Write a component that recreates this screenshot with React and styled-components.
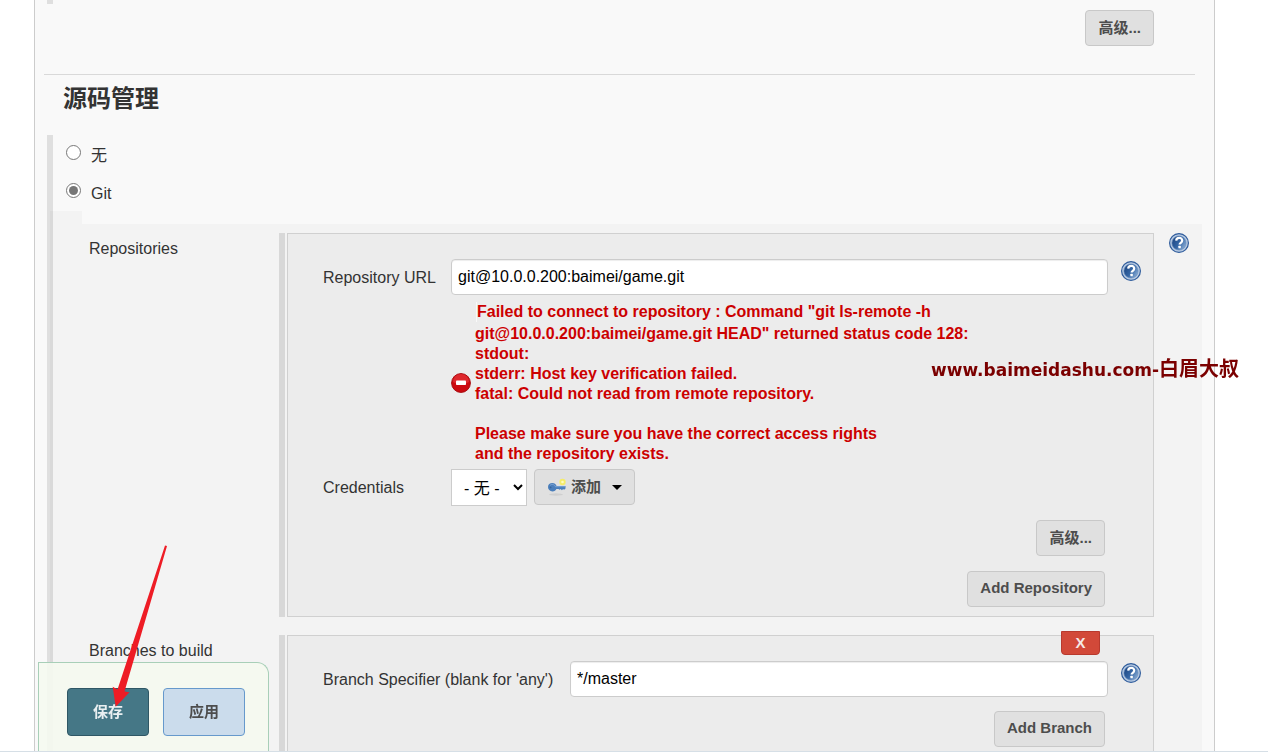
import { useId, useState } from "react";
import styled, { createGlobalStyle } from "styled-components";

const errorLines = [
  'Failed to connect to repository : Command "git ls-remote -h',
  'git@10.0.0.200:baimei/game.git HEAD" returned status code 128:',
  "stdout:",
  "stderr: Host key verification failed.",
  "fatal: Could not read from remote repository.",
  "",
  "Please make sure you have the correct access rights",
  "and the repository exists.",
];

function HelpIcon() {
  const id = useId();

  return (
    <svg width="20" height="20" viewBox="0 0 20 20" aria-hidden="true">
      <defs>
        <linearGradient id={id} x1="0" y1="0.2" x2="1" y2="0.8">
          <stop offset="0" stopColor="#1d4580" />
          <stop offset="0.5" stopColor="#3465a4" />
          <stop offset="1" stopColor="#8fb0d6" />
        </linearGradient>
      </defs>
      <circle cx="10" cy="10" r="9.4" fill="#b9cbe2" stroke="#2f5c9c" strokeWidth="1.2" />
      <circle cx="10" cy="10" r="7.1" fill={`url(#${id})`} stroke="#6288bb" strokeWidth="0.6" />
      <path
        d="M7.2 7.6C7.3 5.7 8.5 4.9 10.2 4.9c1.8 0 3 1 3 2.5 0 2.4-2.6 2.3-2.6 4.2"
        fill="none"
        stroke="#fff"
        strokeWidth="2.2"
      />
      <rect x="9.4" y="12.8" width="2.4" height="2.4" rx="0.5" fill="#fff" />
    </svg>
  );
}

function ErrorIcon() {
  return (
    <svg width="20" height="20" viewBox="0 0 20 20" aria-hidden="true">
      <circle cx="10" cy="10" r="9.4" fill="#cc0a10" stroke="#a80c10" strokeWidth="1" />
      <path d="M2 9a8 8 0 0 1 16 0c-4 2.5-12 2.5-16 0z" fill="#e5343a" opacity="0.7" />
      <rect x="5" y="7.5" width="10" height="4.5" rx="0.8" fill="#fff" />
    </svg>
  );
}

function KeyIcon() {
  return (
    <svg width="20" height="20" viewBox="0 0 20 20" aria-hidden="true">
      <ellipse cx="9" cy="18.5" rx="7" ry="1.2" fill="#cfcfcf" />
      <path
        d="M5.5 7C2.7 7 1 8.600 1 11s1.800 4.400 4.500 4.400c2 0 3.200-1 3.900-2.400h2.100l1 .8 1.200-.8 1.200 1.200 1.200-1.200 1 .8 1.400-1.200V10H9.600C8.800 8 7.500 7 5.500 7z"
        fill="#4a7ebb"
      />
      <path d="M3 9.400c1.500-1.500 4-1.500 5.500 1.300H18" fill="none" stroke="#7ba4d4" strokeWidth="1" />
      <circle cx="3.600" cy="11.400" r="0.9" fill="#35629c" />
      <circle cx="15.500" cy="6" r="3.200" fill="#f5ec6a" />
      <circle cx="15.500" cy="6" r="1.300" fill="#fffbc0" />
    </svg>
  );
}

export default function App() {
  const [scm, setScm] = useState("git");
  const [url, setUrl] = useState("git@10.0.0.200:baimei/game.git");
  const [branch, setBranch] = useState("*/master");

  return (
    <>
      <GlobalStyle />
      <Page>
        <Panel>
          <TopSection>
            <BarEnd />
            <Button>高级...</Button>
          </TopSection>
          <Divider />
          <Title>源码管理</Title>

          <ScmBlock>
            <RadioRow>
              <input
                type="radio"
                name="scm"
                checked={scm === "none"}
                onChange={() => setScm("none")}
              />
              <span>无</span>
            </RadioRow>
            <RadioRow>
              <input
                type="radio"
                name="scm"
                checked={scm === "git"}
                onChange={() => setScm("git")}
              />
              <span>Git</span>
            </RadioRow>

            <NestedTab />
            <Nested>
              <SectionName>Repositories</SectionName>
              <Handle>
                <Card>
                  <FieldRow $labelWidth="128px">
                    <label htmlFor="url">Repository URL</label>
                    <TextInput id="url" value={url} onChange={(e) => setUrl(e.target.value)} />
                    <HelpButton aria-label="Help for Repository URL">
                      <HelpIcon />
                    </HelpButton>
                  </FieldRow>

                  <ErrorRow>
                    <ErrorIcon />
                    <div>
                      {errorLines.map((line, index) => (
                        <ErrorLine key={index}>{line}</ErrorLine>
                      ))}
                    </div>
                  </ErrorRow>

                  <FieldRow $labelWidth="128px">
                    <label htmlFor="credentials">Credentials</label>
                    <Credentials>
                      <Select id="credentials">
                        <option>- 无 -</option>
                      </Select>
                      <Button>
                        <KeyIcon />
                        添加
                        <Caret />
                      </Button>
                    </Credentials>
                  </FieldRow>

                  <Actions>
                    <Button>高级...</Button>
                    <Button>Add Repository</Button>
                  </Actions>
                </Card>
              </Handle>
              <HelpButton aria-label="Help for Git">
                <HelpIcon />
              </HelpButton>

              <SectionName>Branches to build</SectionName>
              <Handle>
                <Card>
                  <DeleteButton>X</DeleteButton>
                  <FieldRow $labelWidth="247px">
                    <label htmlFor="branch">Branch Specifier (blank for 'any')</label>
                    <TextInput
                      id="branch"
                      value={branch}
                      onChange={(e) => setBranch(e.target.value)}
                    />
                    <HelpButton aria-label="Help for Branch Specifier">
                      <HelpIcon />
                    </HelpButton>
                  </FieldRow>
                  <Actions>
                    <Button>Add Branch</Button>
                  </Actions>
                </Card>
              </Handle>
            </Nested>
          </ScmBlock>
        </Panel>

        <SaveBar>
          <SaveButton $primary>保存</SaveButton>
          <SaveButton>应用</SaveButton>
        </SaveBar>
        <BottomLine />

        <Watermark>
          www.baimeidashu.com-<span>白眉大叔</span>
        </Watermark>

        <Arrow width="60" height="166" viewBox="0 0 60 166" aria-hidden="true">
          <path
            d="M55 0.5L57 1L14.5 146.5L19.5 147.3L5.7 161.7L2.7 141.7L7.5 144.500z"
            fill="#ee1c25"
          />
        </Arrow>
      </Page>
    </>
  );
}

const GlobalStyle = createGlobalStyle`
  * {
    box-sizing: border-box;
  }

  body {
    margin: 0;
    background-color: #fff;
  }

  body, button, input, select {
    font-family: "Liberation Sans", "Noto Sans CJK SC", sans-serif;
  }
`;

const Page = styled.div`
  height: 100vh;
  overflow: hidden;
  padding: 0 53px 0 34px;
  color: #333;
  font-size: 16px;
  line-height: 20px;
`;

const Panel = styled.main`
  min-height: 100%;
  border: solid #ccc;
  border-width: 0 1px;
  background-color: #f9f9f9;
`;

const TopSection = styled.div`
  display: flex;
  justify-content: space-between;
  align-items: flex-start;
  padding: 0 60px 28px 12px;

  button {
    margin-top: 10px;
  }
`;

const BarEnd = styled.div`
  width: 6px;
  height: 4px;
  background-color: #dfdfdf;
`;

const Divider = styled.hr`
  height: 1px;
  margin: 0 19px 0 9px;
  border: none;
  background-color: #d9d9d9;
`;

const Title = styled.h2`
  margin: 0;
  padding: 8px 28px 20px;
  font-size: 24px;
  line-height: 32px;
`;

const ScmBlock = styled.div`
  margin: 0 12px;
  border-left: 6px solid #dfdfdf;
`;

const RadioRow = styled.label`
  display: flex;
  align-items: center;
  gap: 10px;
  height: 38px;
  padding: 3px 0 0 13px;

  input {
    width: 15px;
    height: 15px;
    margin: 0 0 6px;
    accent-color: #767676;
  }
`;

const NestedTab = styled.div`
  width: 32px;
  height: 13px;
  margin-left: -3px;
  background-color: rgba(0, 0, 0, 0.025);
`;

const Nested = styled.div`
  display: grid;
  grid-template-columns: 190px 1fr 35px;
  row-gap: 18px;
  margin-left: -3px;
  padding: 9px 13px 20px 39px;
  background-color: rgba(0, 0, 0, 0.025);
`;

const SectionName = styled.div`
  padding-top: 6px;
`;

const Handle = styled.div`
  padding-left: 2px;
  border-left: 6px solid #d8d8d8;
`;

const Card = styled.div`
  position: relative;
  padding: 25px 12px 9px 35px;
  border: 1px solid #d0d0d0;
  background-color: #ececec;
`;

const FieldRow = styled.div`
  display: grid;
  grid-template-columns: ${(props) => props.$labelWidth} 1fr 33px;

  label {
    padding-top: 9px;
  }

  > button {
    margin-top: 2px;
  }
`;

const TextInput = styled.input`
  width: 100%;
  height: 36px;
  padding: 0 6px;
  border: 1px solid #ccc;
  border-radius: 4px;
  box-shadow: inset 0 1px 1px rgba(0, 0, 0, 0.075);
  color: #000;
  font-size: 16px;
`;

const HelpButton = styled.button`
  width: 20px;
  height: 20px;
  justify-self: end;
  padding: 0;
  border: none;
  background: none;

  svg {
    display: block;
  }
`;

const ErrorRow = styled.div`
  display: flex;
  align-items: center;
  gap: 4px;
  margin-left: 128px;
  padding: 6px 0 5px;
  color: #c00;
  font-weight: bold;
`;

const ErrorLine = styled.div`
  width: fit-content;
  min-height: 20px;

  &:first-child {
    margin: 1px 0 2px 1px;
    border-left: 1px solid #f9f9f9;
  }
`;

const Credentials = styled.div`
  display: flex;
  align-items: flex-start;
  gap: 7px;
`;

const Select = styled.select`
  width: 76px;
  height: 37px;
  padding: 2px 0 0 8px;
  border: 1px solid #ccc;
  border-radius: 0;
  background-color: #fff;
  color: #000;
  font-size: 16px;
`;

const Button = styled.button`
  display: flex;
  align-items: center;
  gap: 4px;
  height: 36px;
  padding: 0 12px 3px;
  border: 1px solid #c8c8c8;
  border-radius: 4px;
  background-color: #e0e0e0;
  color: #4d4d4d;
  font-size: 15px;
  font-weight: bold;
`;

const Caret = styled.span`
  margin: 4px 0 0 7px;
  border: solid transparent;
  border-width: 5px 5px 0;
  border-top-color: #000;
`;

const Actions = styled.div`
  display: flex;
  flex-direction: column;
  align-items: flex-end;
  gap: 15px;
  padding: 14px 36px 0 0;
`;

const DeleteButton = styled.button`
  position: absolute;
  top: -5px;
  right: 53px;
  width: 39px;
  height: 24px;
  padding: 0 0 2px;
  border: 1px solid #b83a2e;
  border-radius: 0 0 4px 4px;
  background-color: #d24939;
  color: #f5e8e6;
  font-size: 15px;
  font-weight: bold;
`;

const SaveBar = styled.div`
  position: fixed;
  bottom: 0;
  left: 38px;
  display: flex;
  gap: 14px;
  padding: 25px 23px 16px 28px;
  border: 1px solid #a8cfb8;
  border-bottom: none;
  border-top-right-radius: 12px;
  background-color: rgba(245, 249, 239, 0.9);
`;

const SaveButton = styled.button`
  width: 82px;
  height: 48px;
  padding: 0 0 3px;
  border: 1px solid ${(props) => (props.$primary ? "#2f5765" : "#6699cc")};
  border-radius: 4px;
  background-color: ${(props) => (props.$primary ? "#457786" : "#cbdcec")};
  color: ${(props) => (props.$primary ? "#e9eff1" : "#4d4d4d")};
  font-size: 15px;
  font-weight: bold;
`;

const BottomLine = styled.div`
  position: fixed;
  right: 0;
  bottom: 0;
  left: 0;
  height: 1px;
  background-color: #d6dfe6;
`;

const Watermark = styled.div`
  position: fixed;
  top: 359px;
  right: 29px;
  color: #7b0000;
  font-family: "DejaVu Sans", "Noto Sans CJK SC", sans-serif;
  font-size: 17px;
  font-weight: bold;
  white-space: nowrap;

  span {
    font-size: 20px;
  }
`;

const Arrow = styled.svg`
  position: fixed;
  top: 545px;
  left: 110px;
  pointer-events: none;
`;
